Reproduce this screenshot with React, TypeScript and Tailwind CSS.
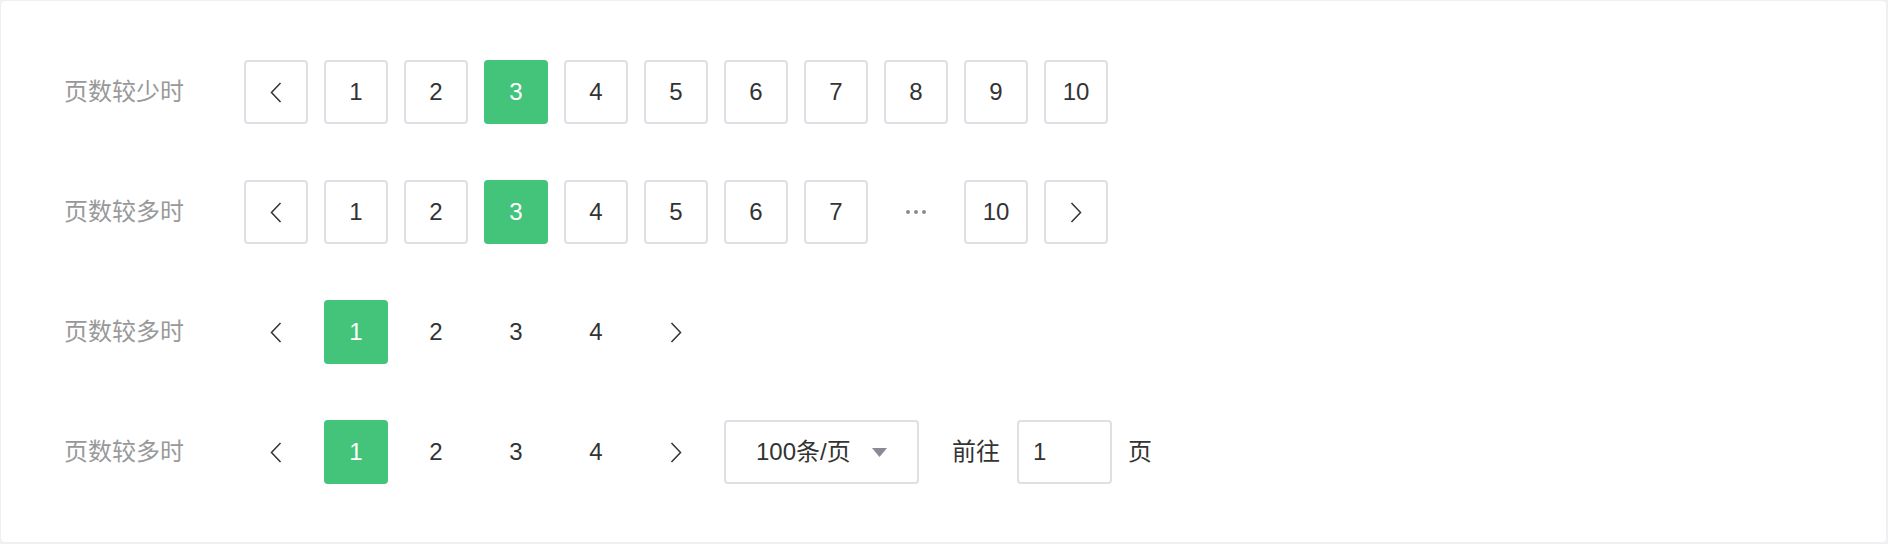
import type { ReactNode } from "react";

type Item = number | "prev" | "next" | "more";

const rowA: Item[] = ["prev", 1, 2, 3, 4, 5, 6, 7, 8, 9, 10];
const rowB: Item[] = ["prev", 1, 2, 3, 4, 5, 6, 7, "more", 10, "next"];
const rowC: Item[] = ["prev", 1, 2, 3, 4, "next"];

function Chevron({ dir }: { dir: "left" | "right" }) {
  return (
    <svg width="12" height="21" viewBox="0 0 12 21" fill="none">
      <polyline
        points={dir === "left" ? "10.5,1 1.5,10.5 10.5,20" : "1.5,1 10.5,10.5 1.5,20"}
        stroke="#333333"
        strokeWidth="1.5"
        strokeLinejoin="miter"
      />
    </svg>
  );
}

function Ellipsis() {
  return (
    <div className="w-16 h-16 flex items-center justify-center gap-[4px]">
      <span className="w-[4px] h-[4px] rounded-full bg-[#8c8c94]" />
      <span className="w-[4px] h-[4px] rounded-full bg-[#8c8c94]" />
      <span className="w-[4px] h-[4px] rounded-full bg-[#8c8c94]" />
    </div>
  );
}

function Cell({ item, active, bordered }: { item: Item; active: boolean; bordered: boolean }) {
  if (item === "more") return <Ellipsis />;
  let content: ReactNode = item;
  if (item === "prev") content = <Chevron dir="left" />;
  if (item === "next") content = <Chevron dir="right" />;
  const base = "w-16 h-16 rounded-[4px] flex items-center justify-center text-[24px] leading-none";
  if (active) {
    return <div className={`${base} bg-[#44c47b] text-white`}>{content}</div>;
  }
  return (
    <div className={`${base} text-[#333333] ${bordered ? "border-2 border-[#dfe0e5] bg-white" : ""}`}>
      {content}
    </div>
  );
}

function Row({ label, children }: { label: string; children: ReactNode }) {
  return (
    <div className="flex items-center h-16">
      <div className="w-[180px] shrink-0 text-[24px] text-[#999999]">{label}</div>
      <div className="flex items-center gap-4">{children}</div>
    </div>
  );
}

function Pager({ items, current, bordered }: { items: Item[]; current: number; bordered: boolean }) {
  return (
    <>
      {items.map((it, i) => (
        <Cell key={i} item={it} active={it === current} bordered={bordered} />
      ))}
    </>
  );
}

export default function App() {
  return (
    <div
      className="w-full h-[544px] bg-[#efeff4] pt-px pl-px pr-[2px] pb-[2px]"
      style={{ fontFamily: '"Liberation Sans", "Noto Sans CJK SC", sans-serif' }}
    >
      <div className="h-full bg-white rounded-[4px] pl-[63px] pt-[59px] flex flex-col gap-14">
        <Row label="页数较少时">
          <Pager items={rowA} current={3} bordered />
        </Row>
        <Row label="页数较多时">
          <Pager items={rowB} current={3} bordered />
        </Row>
        <Row label="页数较多时">
          <Pager items={rowC} current={1} bordered={false} />
        </Row>
        <Row label="页数较多时">
          <Pager items={rowC} current={1} bordered={false} />
          <div className="w-[195px] h-16 rounded-[4px] border-2 border-[#dfe0e5] flex items-center justify-between pl-[30px] pr-[30px] text-[24px] text-[#333333]">
            <span>100条/页</span>
            <svg width="15" height="9" viewBox="0 0 15 9">
              <polygon points="0,0 15,0 7.5,9" fill="#8a8a94" />
            </svg>
          </div>
          <div className="flex items-center ml-[17px] text-[24px] text-[#333333]">
            <span>前往</span>
            <div className="ml-[17px] w-[95px] h-16 rounded-[4px] border-2 border-[#dfe0e5] flex items-center pl-[14px]">
              1
            </div>
            <span className="ml-[16px]">页</span>
          </div>
        </Row>
      </div>
    </div>
  );
}
